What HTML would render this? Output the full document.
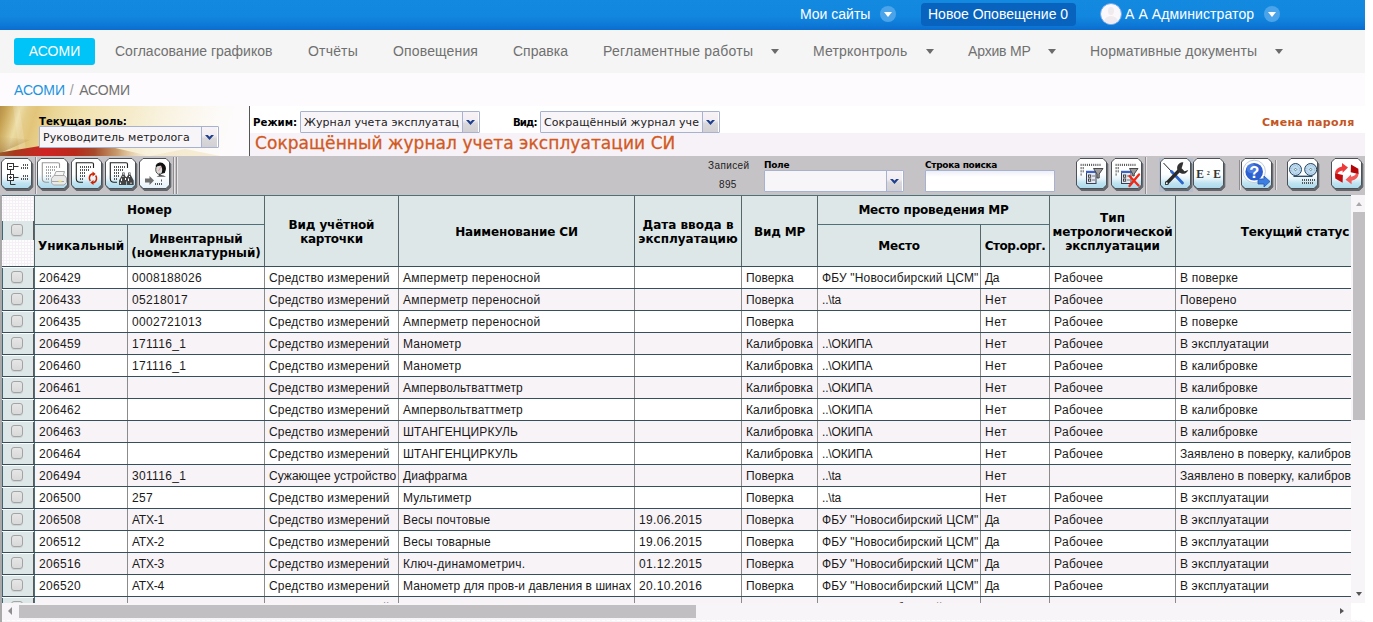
<!DOCTYPE html><html lang="ru"><head><meta charset="utf-8"><title>АСОМИ</title><style>html,body{margin:0;padding:0}
body{width:1373px;height:622px;overflow:hidden;background:#fff;position:relative;font-family:"Liberation Sans",sans-serif;font-size:14px;color:#555}
#page{position:absolute;left:0;top:0;width:1365px;height:622px;overflow:hidden;background:#fdfbfd}
#tstrip{position:absolute;left:250px;top:133px;width:1115px;height:23px;background:#f7f2f7}
#hdr{position:absolute;left:0;top:0;width:1365px;height:30px;background:linear-gradient(#1389e0 0,#1287df 55%,#0d78d6 85%,#0a6ccf 100%);color:#fff}
#hdr span.t{position:absolute;top:0;line-height:29px;font-size:14px;white-space:nowrap}
.circ{position:absolute;width:16px;height:16px;border-radius:50%;background:#4ba4ea;top:6px}
.circ:after{content:"";position:absolute;left:4px;top:6px;border:4px solid transparent;border-top:5px solid #fff;border-bottom:0}
#notif{position:absolute;left:921px;top:3px;width:155px;height:23px;border-radius:4px;background:#0763be}
#ava{position:absolute;left:1100px;top:3px;width:20px;height:20px;border-radius:50%;background:#fbf8fb;border:1px solid #6ea6f0;overflow:hidden}
#ava:before{content:"";position:absolute;left:7px;top:3px;width:6px;height:8px;border-radius:50%;background:#efebef}
#ava:after{content:"";position:absolute;left:3px;top:12px;width:14px;height:12px;border-radius:50% 50% 0 0;background:#efebef}
#nav{position:absolute;left:0;top:30px;width:1365px;height:43px;background:#f5f5f5}
#nav span{position:absolute;top:0;line-height:42px;font-size:14px;color:#707070;white-space:nowrap}
#nav i.car{position:absolute;top:19px;border:4px solid transparent;border-top:5px solid #6b6b6b;border-bottom:0;width:0;height:0}
#nav .act{left:14px;top:8px;width:81px;height:27px;line-height:27px;border-radius:3px;background:#00c3f7;color:#fff;text-align:center}
#bc{position:absolute;left:14px;top:74px;line-height:33px;font-size:14px;color:#707070;white-space:pre;letter-spacing:-.12px}
#bc b{font-weight:normal;color:#1b94e0}
#bc i{font-style:normal;color:#9c9c9c;margin:0 1.800px 0 1.200px}
#role{position:absolute;left:0;top:106px;width:249px;height:50px;overflow:hidden}
#vline{position:absolute;left:249px;top:106px;width:1px;height:50px;background:#555}
.lbl{position:absolute;font-family:"DejaVu Sans",sans-serif;font-weight:bold;font-size:10.2px;color:#000;white-space:nowrap;line-height:12px}
.lbl.s{font-size:9px;letter-spacing:-.3px}
.sel{position:absolute;box-sizing:border-box;border:1px solid #a7b2d0;background:#f8f5f9;font-family:"DejaVu Sans",sans-serif;font-size:11px;letter-spacing:.15px;color:#222;white-space:nowrap;overflow:hidden;height:22px;line-height:22px;padding-left:3px;border-radius:1px}
.sel b{position:absolute;right:0;top:0;bottom:0;width:16px;background:linear-gradient(#f6f2f6 0,#f1edf1 42%,#d9d7d9 58%,#d2d0d2 100%);border-left:1px solid #a7b2d0;box-shadow:inset -1px 0 0 #fff}
.sel b:after{content:"";position:absolute;left:3px;top:8px;width:9px;height:5px;background:#1f3f8f;clip-path:polygon(0 0,2.800px 0,4.500px 1.800px,6.200px 0,9px 0,4.500px 5px)}
#title{position:absolute;left:255px;top:133px;font-size:17px;line-height:20px;color:#d2591f;white-space:nowrap;font-family:"DejaVu Sans","Liberation Sans",sans-serif;letter-spacing:.06px;-webkit-text-stroke:.3px #d2591f}
#titlebg{position:absolute;left:250px;top:106px;width:1115px;height:27px;background:#fff}
#pwd{position:absolute;left:1262px;top:116px;font-family:"DejaVu Sans",sans-serif;font-weight:bold;font-size:11px;color:#c4561f;white-space:nowrap;letter-spacing:.3px}
#tb{position:absolute;left:0;top:156px;width:1365px;height:39px;background:#c5c3c6}
.btn{position:absolute;top:2px;overflow:visible}
.sep{position:absolute;top:1px;width:1px;height:37px;background:#8f8d90;box-shadow:1px 0 0 #e6e4e7}
.small{position:absolute;font-family:"Liberation Sans",sans-serif;font-size:10px;color:#222;white-space:nowrap;line-height:12px}
#grid{position:absolute;left:0;top:195px;width:1351px;height:408px;overflow:hidden;background:#fdfbfd}
#grid:before{content:"";position:absolute;left:0;top:0;width:2px;height:100%;background:#a9a9a9;z-index:3}
.th{position:absolute;box-sizing:content-box;border-left:1px solid #56676b;border-top:1px solid #4f7078;background:#dde7e7;display:flex;align-items:center;justify-content:center;text-align:center;font-family:"DejaVu Sans",sans-serif;font-weight:bold;font-size:12px;line-height:14px;color:#000;overflow:hidden}
.th span{display:block;white-space:nowrap}
.th i{font-style:normal}
.chh{position:absolute;left:2px;top:1px;width:32px;height:70px;background:#fefdfe radial-gradient(#f5f0f5 1px,rgba(255,255,255,0) 1.300px) 0 0/3px 3px;border-top:0}
.chm{position:absolute;left:2px;top:26px;width:30px;height:19px;background:#dde7e7;border-left:1px solid #3f6672;border-right:1px solid #5a5a5a}
.cb{position:absolute;left:8px;top:3px;width:10px;height:10px;border:1px solid #a3a3a3;border-radius:3px;background:linear-gradient(#e6e6e6,#d9d9d9);box-shadow:0 1px 0 rgba(0,0,0,.08)}
.row{position:absolute;left:0;width:1500px;height:22px}
.row .cc{position:absolute;left:2px;top:1px;width:30px;height:20px;background:#dde7e7;border-left:1px solid #3f6672;border-right:1px solid #5a5a5a}
.row .cc .cb{left:8px;top:3px}
.row:before{content:"";position:absolute;left:2px;top:-1px;width:1500px;height:1px;background:#35505b}
.td{position:absolute;top:0;height:21px;box-sizing:content-box;border-left:1px solid #8b8b8b;font-size:12px;line-height:23px;color:#1a1a1a;white-space:nowrap;overflow:hidden;padding-left:4px;letter-spacing:.08px}
.td.d{letter-spacing:.33px}
.td.s{letter-spacing:.2px}
.r0 .td{background:#fff}
.r1 .td{background:#f7f3f7}
.td{margin:0}
#vs{position:absolute;left:1351px;top:195px;width:14px;height:408px;background:#f8f5f8}
#vs b{position:absolute;left:2px;top:17px;width:12px;height:208px;background:#c1bfc2}
#hs{position:absolute;left:2px;top:603px;width:1349px;height:17px;background:#f8f5f8}
#hs b{position:absolute;left:17px;top:2px;width:677px;height:13px;background:#c1bfc2}
.ar{position:absolute;width:0;height:0;border:0 solid transparent}

.td:nth-child(2){border-left-color:#4a6f7a}
</style></head><body>
<div id="page">
<div id="hdr">
<span class="t" style="left:800px">Мои сайты</span><i class="circ" style="left:880px"></i>
<div id="notif"></div><span class="t" style="left:928px">Новое Оповещение 0</span>
<div id="ava"></div><span class="t" style="left:1125px;letter-spacing:.1px">А А Администратор</span><i class="circ" style="left:1264px"></i>
</div>
<div id="nav">
<span class="act">АСОМИ</span>
<span style="left:115px">Согласование графиков</span>
<span style="left:308px;letter-spacing:.18px">Отчёты</span>
<span style="left:393px;letter-spacing:.15px">Оповещения</span>
<span style="left:513px">Справка</span>
<span style="left:603px;letter-spacing:.23px">Регламентные работы</span><i class="car" style="left:771px"></i>
<span style="left:813px;letter-spacing:.18px">Метрконтроль</span><i class="car" style="left:926px"></i>
<span style="left:968px;letter-spacing:-.17px">Архив МР</span><i class="car" style="left:1048px"></i>
<span style="left:1090px;letter-spacing:.12px">Нормативные документы</span><i class="car" style="left:1275px"></i>
</div>
<div id="bc"><b>АСОМИ</b><i> / </i>АСОМИ</div>
<div id="titlebg"></div><div id="tstrip"></div>
<div id="role"><svg width="249" height="50" viewBox="0 0 249 50"><defs>
<linearGradient id="g1" x1="0" y1="0" x2="1" y2="0.06"><stop offset="0" stop-color="#b58f46"/><stop offset=".03" stop-color="#caa658"/><stop offset=".06" stop-color="#dcc27c"/><stop offset=".085" stop-color="#ecdca4"/><stop offset=".115" stop-color="#e4cb88"/><stop offset=".15" stop-color="#e2c57a"/><stop offset=".22" stop-color="#ead595"/><stop offset=".34" stop-color="#f1e2b0"/><stop offset=".5" stop-color="#f5eac6"/><stop offset=".64" stop-color="#f8f1dc"/><stop offset=".78" stop-color="#fbf7ee"/><stop offset=".9" stop-color="#fdfbf9"/><stop offset="1" stop-color="#fdfbfd"/></linearGradient>
<linearGradient id="g2" x1="0" y1="0" x2="1" y2="0"><stop offset="0" stop-color="#96582c"/><stop offset=".1" stop-color="#a8381e"/><stop offset=".3" stop-color="#cf2424"/><stop offset=".5" stop-color="#b82a1c"/><stop offset=".63" stop-color="#a64a2c"/><stop offset=".78" stop-color="#bf8c5c" stop-opacity=".85"/><stop offset="1" stop-color="#ead8b0" stop-opacity="0"/></linearGradient>
<linearGradient id="g4" x1="0" y1="0" x2="0" y2="1"><stop offset="0" stop-color="#9a7a3c" stop-opacity="0"/><stop offset="1" stop-color="#9a6a34" stop-opacity=".55"/></linearGradient>
</defs><rect width="249" height="50" fill="url(#g1)"/>
<path d="M13 0L19 0L27 50L20 50z" fill="#fff" opacity=".15"/>
<path d="M0 30L30 34L0 47z" fill="url(#g4)"/>
<path d="M0 46.500L40 40L100 38.500L150 50H0z" fill="url(#g2)"/>
<path d="M150 50l35-7 35 7z" fill="#f1e2c0" opacity=".6"/>
</svg></div><div id="vline"></div>
<div class="lbl" style="left:39px;top:116px">Текущая роль:</div>
<div class="sel" style="left:39px;top:126px;width:180px;letter-spacing:.03px">Руководитель метролога<b></b></div>
<div class="lbl" style="left:253px;top:117px">Режим:</div>
<div class="sel" style="left:300px;top:111px;width:180px;letter-spacing:.09px">Журнал учета эксплуатац<b></b></div>
<div class="lbl" style="left:513px;top:117px;letter-spacing:-.9px">Вид:</div>
<div class="sel" style="left:540px;top:111px;width:180px;letter-spacing:.08px">Сокращённый журнал уче<b></b></div>
<div id="title">Сокращённый журнал учета эксплуатации СИ</div>
<div id="pwd">Смена пароля</div>
<svg width="0" height="0" style="position:absolute"><defs><linearGradient id="bg" x1="0" y1="0" x2="0" y2="1"><stop offset="0" stop-color="#fff"/><stop offset=".52" stop-color="#fdfeff"/><stop offset=".68" stop-color="#e6f4fa"/><stop offset=".82" stop-color="#bfe3f0"/><stop offset="1" stop-color="#acd9ec"/></linearGradient><linearGradient id="bgu" x1="0" y1="0" x2="0" y2="1"><stop offset="0" stop-color="#fff"/><stop offset=".6" stop-color="#fff"/><stop offset="1" stop-color="#e3f0fa"/></linearGradient></defs></svg><div id="tb">
<svg class="btn" style="left:1px" width="34" height="34" viewBox="0 0 34 34"><path d="M4 .5H27L30.500 4V27L27 30.500H4L.5 27V4Z" transform="translate(1.3,2)" fill="#63676c" stroke="#63676c" stroke-linejoin="round"/><path d="M4 .5H27L30.500 4V27L27 30.500H4L.5 27V4Z" fill="url(#bg)" stroke="#4c5157" stroke-width="1" stroke-linejoin="round"/><g fill="none" stroke="#333" stroke-width="1"><rect x="6.500" y="5.500" width="6" height="6" fill="#fff"/><path d="M8 8.500h3M12.500 8.500h5M9.500 11.500v5"/><rect x="6.500" y="16.500" width="6" height="6" fill="#fff"/><path d="M8 19.500h3M9.500 18v3M12.500 19.500h5M9.500 22.500v4h5"/></g><rect x="22" y="6" width="1" height="2" fill="#555"/><rect x="24" y="6" width="1" height="2" fill="#555"/><rect x="26" y="6" width="1" height="2" fill="#555"/><rect x="20" y="9" width="1" height="2" fill="#555"/><rect x="22" y="9" width="1" height="2" fill="#555"/><rect x="24" y="9" width="1" height="2" fill="#555"/><rect x="26" y="9" width="1" height="2" fill="#555"/><rect x="22" y="17" width="1" height="2" fill="#555"/><rect x="24" y="17" width="1" height="2" fill="#555"/><rect x="26" y="17" width="1" height="2" fill="#555"/><rect x="20" y="20" width="1" height="2" fill="#555"/><rect x="22" y="20" width="1" height="2" fill="#555"/><rect x="24" y="20" width="1" height="2" fill="#555"/><rect x="26" y="20" width="1" height="2" fill="#555"/></svg><div class="sep" style="left:35px"></div>
<svg class="btn" style="left:37px" width="34" height="34" viewBox="0 0 34 34"><path d="M4 .5H27L30.500 4V27L27 30.500H4L.5 27V4Z" transform="translate(1.3,2)" fill="#63676c" stroke="#63676c" stroke-linejoin="round"/><path d="M4 .5H27L30.500 4V27L27 30.500H4L.5 27V4Z" fill="url(#bg)" stroke="#4c5157" stroke-width="1" stroke-linejoin="round"/><path d="M22.500 10V6Q22.500 4.700 21 4.700H5.300V20.500Q5.300 24.300 9 24.300H12" fill="none" stroke="#999" stroke-width="1.100"/><rect x="9" y="8" width="1" height="2" fill="#a4a4a4"/><rect x="11" y="8" width="1" height="2" fill="#a4a4a4"/><rect x="13" y="8" width="1" height="2" fill="#a4a4a4"/><rect x="15" y="8" width="1" height="2" fill="#a4a4a4"/><rect x="17" y="8" width="1" height="2" fill="#a4a4a4"/><rect x="19" y="8" width="1" height="2" fill="#a4a4a4"/><rect x="9" y="11" width="1" height="2" fill="#a4a4a4"/><rect x="11" y="11" width="1" height="2" fill="#a4a4a4"/><rect x="13" y="11" width="1" height="2" fill="#a4a4a4"/><rect x="15" y="11" width="1" height="2" fill="#a4a4a4"/><rect x="17" y="11" width="1" height="2" fill="#a4a4a4"/><rect x="9" y="14" width="1" height="2" fill="#a4a4a4"/><rect x="11" y="14" width="1" height="2" fill="#a4a4a4"/><rect x="13" y="14" width="1" height="2" fill="#a4a4a4"/><rect x="9" y="17" width="1" height="2" fill="#a4a4a4"/><rect x="11" y="17" width="1" height="2" fill="#a4a4a4"/><rect x="13" y="17" width="1" height="2" fill="#a4a4a4"/><rect x="9" y="20" width="1" height="2" fill="#a4a4a4"/><rect x="11" y="20" width="1" height="2" fill="#a4a4a4"/><g stroke="#a8a8a8" stroke-width="1" fill="#f6f6f6"><path d="M19 13.500h8.500l-1.500 5h-9z"/><path d="M14.500 20.500l2.500-3h10.500l2 2.500v4.500l-2.500 2.500h-10.500l-2-2z" fill="#e9e9e9"/><path d="M15 23.500h12" /><rect x="21.500" y="22.800" width="3" height="1.400" fill="#e8e060" stroke="none"/></g></svg>
<svg class="btn" style="left:71px" width="34" height="34" viewBox="0 0 34 34"><path d="M4 .5H27L30.500 4V27L27 30.500H4L.5 27V4Z" transform="translate(1.3,2)" fill="#63676c" stroke="#63676c" stroke-linejoin="round"/><path d="M4 .5H27L30.500 4V27L27 30.500H4L.5 27V4Z" fill="url(#bg)" stroke="#4c5157" stroke-width="1" stroke-linejoin="round"/><path d="M22.500 10V6Q22.500 4.700 21 4.700H5.300V20.500Q5.300 24.300 9 24.300H12" fill="none" stroke="#222" stroke-width="1.100"/><rect x="9" y="8" width="1" height="2" fill="#555"/><rect x="11" y="8" width="1" height="2" fill="#555"/><rect x="13" y="8" width="1" height="2" fill="#555"/><rect x="15" y="8" width="1" height="2" fill="#555"/><rect x="17" y="8" width="1" height="2" fill="#555"/><rect x="19" y="8" width="1" height="2" fill="#555"/><rect x="9" y="11" width="1" height="2" fill="#555"/><rect x="11" y="11" width="1" height="2" fill="#555"/><rect x="13" y="11" width="1" height="2" fill="#555"/><rect x="15" y="11" width="1" height="2" fill="#555"/><rect x="17" y="11" width="1" height="2" fill="#555"/><rect x="9" y="14" width="1" height="2" fill="#555"/><rect x="11" y="14" width="1" height="2" fill="#555"/><rect x="13" y="14" width="1" height="2" fill="#555"/><rect x="9" y="17" width="1" height="2" fill="#555"/><rect x="11" y="17" width="1" height="2" fill="#555"/><rect x="13" y="17" width="1" height="2" fill="#555"/><rect x="9" y="20" width="1" height="2" fill="#555"/><rect x="11" y="20" width="1" height="2" fill="#555"/><g fill="none" stroke="#cc2200" stroke-width="1.500"><path d="M19.300 23a3.600 4.300 0 0 1 1.500-7h1.500"/><path d="M24.600 17.500a3.600 4.300 0 0 1-1.500 7h-1.500"/></g><path d="M21.500 13.600l3.200 2.400-3.200 2.400z" fill="#cc2200"/><path d="M22.500 22.100l-3.200 2.400 3.200 2.400z" fill="#cc2200"/></svg>
<svg class="btn" style="left:105px" width="34" height="34" viewBox="0 0 34 34"><path d="M4 .5H27L30.500 4V27L27 30.500H4L.5 27V4Z" transform="translate(1.3,2)" fill="#63676c" stroke="#63676c" stroke-linejoin="round"/><path d="M4 .5H27L30.500 4V27L27 30.500H4L.5 27V4Z" fill="url(#bg)" stroke="#4c5157" stroke-width="1" stroke-linejoin="round"/><path d="M22.500 10V6Q22.500 4.700 21 4.700H5.300V20.500Q5.300 24.300 9 24.300H12" fill="none" stroke="#222" stroke-width="1.100"/><rect x="9" y="8" width="1" height="2" fill="#555"/><rect x="11" y="8" width="1" height="2" fill="#555"/><rect x="13" y="8" width="1" height="2" fill="#555"/><rect x="15" y="8" width="1" height="2" fill="#555"/><rect x="17" y="8" width="1" height="2" fill="#555"/><rect x="19" y="8" width="1" height="2" fill="#555"/><rect x="9" y="11" width="1" height="2" fill="#555"/><rect x="11" y="11" width="1" height="2" fill="#555"/><rect x="13" y="11" width="1" height="2" fill="#555"/><rect x="15" y="11" width="1" height="2" fill="#555"/><rect x="17" y="11" width="1" height="2" fill="#555"/><rect x="9" y="14" width="1" height="2" fill="#555"/><rect x="11" y="14" width="1" height="2" fill="#555"/><rect x="13" y="14" width="1" height="2" fill="#555"/><rect x="9" y="17" width="1" height="2" fill="#555"/><rect x="11" y="17" width="1" height="2" fill="#555"/><rect x="13" y="17" width="1" height="2" fill="#555"/><rect x="9" y="20" width="1" height="2" fill="#555"/><rect x="11" y="20" width="1" height="2" fill="#555"/><g fill="#454545"><path d="M17.300 14.400h2.300v2.300l1.400 2.500v7.800h-7v-4.500l3.300-6z"/><path d="M23.200 14.400h2.300v2l3.200 6v4.600h-7v-7.800l1.500-2.500z"/><rect x="20" y="19" width="3" height="4.500"/></g><g fill="#fff"><rect x="18" y="15.300" width="1" height="1.200"/><rect x="24" y="15.300" width="1" height="1.200"/><rect x="16" y="20.500" width="1" height="2.500"/><rect x="20" y="20" width="1" height="2"/><rect x="23" y="20.500" width="1" height="2.500"/><rect x="15" y="24.500" width="1" height="1.500"/><rect x="25.500" y="24.500" width="1" height="1.500"/><rect x="17.500" y="18" width="1" height="1"/><rect x="24" y="18" width="1" height="1"/></g></svg>
<svg class="btn" style="left:139px" width="34" height="34" viewBox="0 0 34 34"><path d="M4 .5H27L30.500 4V27L27 30.500H4L.5 27V4Z" transform="translate(1.3,2)" fill="#63676c" stroke="#63676c" stroke-linejoin="round"/><path d="M4 .5H27L30.500 4V27L27 30.500H4L.5 27V4Z" fill="url(#bgu)" stroke="#4c5157" stroke-width="1" stroke-linejoin="round"/><path d="M6 20.500h4.500v-2.500l4.500 4.500-4.500 4.500v-2.500h-4.500z" fill="#6e6e6e"/><rect x="16" y="25" width="1" height="2" fill="#555"/><rect x="18" y="25" width="1" height="2" fill="#555"/><rect x="20" y="25" width="1" height="2" fill="#555"/><rect x="22" y="25" width="1" height="2" fill="#555"/><rect x="22" y="21.500" width="1" height="2" fill="#555"/><ellipse cx="20.500" cy="11.500" rx="3.800" ry="5" fill="#d8d8d8" stroke="#333" stroke-width=".8"/><path d="M17 8.500a4.500 4.500 0 0 1 8-1.500q2.500 3 .3 7.500l-2 .5q1.500-4-1-7.500" fill="#111" stroke="#111" stroke-width="1.200"/><path d="M19.500 13l2.500-4.500" stroke="#e99" stroke-width="1"/><path d="M17.500 18.700q4.500-3.500 9.500 0z" fill="#555"/><rect x="20" y="15.500" width="1.500" height="2.500" fill="#444"/></svg>
<div class="sep" style="left:173px"></div><div class="sep" style="left:176px"></div>
<div class="small" style="left:708px;top:4px;letter-spacing:.4px">Записей</div>
<div class="small" style="left:719px;top:23px;letter-spacing:.35px">895</div>
<div class="lbl s" style="left:764px;top:3px">Поле</div>
<div class="sel" style="left:764px;top:14px;width:140px"><b></b></div>
<div class="lbl s" style="left:925px;top:3px">Строка поиска</div>
<div class="sel" style="left:925px;top:14px;width:130px;background:linear-gradient(#eef0f8,#fff 6px)"></div>
<svg class="btn" style="left:1076px" width="34" height="34" viewBox="0 0 34 34"><path d="M4 .5H27L30.500 4V27L27 30.500H4L.5 27V4Z" transform="translate(1.3,2)" fill="#63676c" stroke="#63676c" stroke-linejoin="round"/><path d="M4 .5H27L30.500 4V27L27 30.500H4L.5 27V4Z" fill="url(#bg)" stroke="#4c5157" stroke-width="1" stroke-linejoin="round"/><rect x="4.6" y="5.8" width="1" height="2.2" fill="#555"/><rect x="6.7" y="5.8" width="1" height="2.2" fill="#555"/><rect x="8.8" y="5.8" width="1" height="2.2" fill="#555"/><rect x="10.9" y="5.8" width="1" height="2.2" fill="#555"/><rect x="13" y="5.8" width="1" height="2.2" fill="#555"/><rect x="15.1" y="5.8" width="1" height="2.2" fill="#555"/><rect x="17.2" y="5.8" width="1" height="2.2" fill="#555"/><rect x="19.3" y="5.8" width="1" height="2.2" fill="#555"/><rect x="21.4" y="5.8" width="1" height="2.2" fill="#555"/><rect x="23.5" y="5.8" width="1" height="2.2" fill="#555"/><rect x="4.6" y="9" width="1" height="2.2" fill="#555"/><rect x="6.7" y="9" width="1" height="2.2" fill="#555"/><rect x="4.6" y="12.2" width="1" height="2.2" fill="#555"/><rect x="6.7" y="12.2" width="1" height="2.2" fill="#555"/><rect x="4.6" y="15.4" width="1" height="2.2" fill="#555"/><rect x="10.500" y="14" width="9.500" height="11.500" fill="#e4e9f4" stroke="#3a3f55" stroke-width="1"/><rect x="10" y="12.800" width="10.500" height="2.200" fill="#3a62c8"/><rect x="12.500" y="17" width="2.200" height="2.200" fill="#fff" stroke="#333" stroke-width=".9"/><rect x="12.500" y="21" width="2.200" height="2.200" fill="#fff" stroke="#333" stroke-width=".9"/><path d="M16 18h3M16 22h3" stroke="#666" stroke-width=".9"/><path d="M17.500 10.500h9.500l-3.800 5.500v4h-2.200v-4z" fill="#9c9c9c" stroke="#3a3a3a" stroke-width=".9"/></svg>
<svg class="btn" style="left:1111px" width="34" height="34" viewBox="0 0 34 34"><path d="M4 .5H27L30.500 4V27L27 30.500H4L.5 27V4Z" transform="translate(1.3,2)" fill="#63676c" stroke="#63676c" stroke-linejoin="round"/><path d="M4 .5H27L30.500 4V27L27 30.500H4L.5 27V4Z" fill="url(#bg)" stroke="#4c5157" stroke-width="1" stroke-linejoin="round"/><rect x="4.6" y="5.8" width="1" height="2.2" fill="#555"/><rect x="6.7" y="5.8" width="1" height="2.2" fill="#555"/><rect x="8.8" y="5.8" width="1" height="2.2" fill="#555"/><rect x="10.9" y="5.8" width="1" height="2.2" fill="#555"/><rect x="13" y="5.8" width="1" height="2.2" fill="#555"/><rect x="15.1" y="5.8" width="1" height="2.2" fill="#555"/><rect x="17.2" y="5.8" width="1" height="2.2" fill="#555"/><rect x="19.3" y="5.8" width="1" height="2.2" fill="#555"/><rect x="21.4" y="5.8" width="1" height="2.2" fill="#555"/><rect x="23.5" y="5.8" width="1" height="2.2" fill="#555"/><rect x="4.6" y="9" width="1" height="2.2" fill="#555"/><rect x="6.7" y="9" width="1" height="2.2" fill="#555"/><rect x="4.6" y="12.2" width="1" height="2.2" fill="#555"/><rect x="6.7" y="12.2" width="1" height="2.2" fill="#555"/><rect x="4.6" y="15.4" width="1" height="2.2" fill="#555"/><rect x="10.500" y="14" width="9.500" height="11.500" fill="#e4e9f4" stroke="#3a3f55" stroke-width="1"/><rect x="10" y="12.800" width="10.500" height="2.200" fill="#3a62c8"/><rect x="12.500" y="17" width="2.200" height="2.200" fill="#fff" stroke="#333" stroke-width=".9"/><rect x="12.500" y="21" width="2.200" height="2.200" fill="#fff" stroke="#333" stroke-width=".9"/><path d="M16 18h3M16 22h3" stroke="#666" stroke-width=".9"/><path d="M18.500 10.500h8.500l-3.800 5.500v2h-1.500v-2z" fill="#9c9c9c" stroke="#3a3a3a" stroke-width=".9"/><path d="M18.500 18l9 9.500M28 16.500l-9.500 11.500" stroke="#f02814" stroke-width="2.300" stroke-linecap="round" fill="none"/></svg><div class="sep" style="left:1145px"></div>
<div style="position:absolute;left:1159px;top:2px;width:34px;height:34px;background:#b3bdcb"></div>
<svg class="btn" style="left:1160px" width="34" height="34" viewBox="0 0 34 34"><path d="M4 .5H27L30.500 4V27L27 30.500H4L.5 27V4Z" transform="translate(1.3,2)" fill="#63676c" stroke="#63676c" stroke-linejoin="round"/><path d="M4 .5H27L30.500 4V27L27 30.500H4L.5 27V4Z" fill="url(#bg)" stroke="#4c5157" stroke-width="1" stroke-linejoin="round"/><path d="M3.500 5l9 9.500" stroke="#222" stroke-width="1"/><path d="M11.500 13.500l11 11.500" stroke="#2a66cc" stroke-width="2.800" stroke-linecap="round"/><path d="M7 25L19.500 12" stroke="#2a2a2a" stroke-width="3.300" stroke-linecap="round"/><path d="M23.300 4.200a5.800 5.800 0 1 0 5 7.800l-3.800 1.200-2.900-2.900 1.200-3.800z" fill="#333"/><rect x="5.500" y="24" width="2.500" height="2.500" fill="#fff" stroke="#222" stroke-width=".8"/></svg>
<svg class="btn" style="left:1193.4px" width="34" height="34" viewBox="0 0 34 34"><path d="M4 .5H27L30.500 4V27L27 30.500H4L.5 27V4Z" transform="translate(1.3,2)" fill="#63676c" stroke="#63676c" stroke-linejoin="round"/><path d="M4 .5H27L30.500 4V27L27 30.500H4L.5 27V4Z" fill="url(#bg)" stroke="#4c5157" stroke-width="1" stroke-linejoin="round"/><text x="3.300" y="20" font-family="Liberation Serif,serif" font-weight="bold" font-size="11.500" fill="#333">E</text><text x="13.800" y="17" font-family="Liberation Serif,serif" font-weight="bold" font-size="6" fill="#333">2</text><text x="20.300" y="20" font-family="Liberation Serif,serif" font-weight="bold" font-size="11.500" fill="#333">E</text></svg><div class="sep" style="left:1239px;top:4px;height:30px"></div>
<svg class="btn" style="left:1241px" width="34" height="34" viewBox="0 0 34 34"><path d="M4 .5H27L30.500 4V27L27 30.500H4L.5 27V4Z" transform="translate(1.3,2)" fill="#63676c" stroke="#63676c" stroke-linejoin="round"/><path d="M4 .5H27L30.500 4V27L27 30.500H4L.5 27V4Z" fill="url(#bg)" stroke="#4c5157" stroke-width="1" stroke-linejoin="round"/><circle cx="13.200" cy="13.400" r="11.200" fill="#fff" stroke="#c4ccdc" stroke-width="1"/><circle cx="13.200" cy="13.700" r="8.800" fill="#2c5fd0"/><circle cx="10.500" cy="10.500" r="4.800" fill="#6a96ee" opacity=".55"/><text x="8.200" y="19.800" font-family="Liberation Sans,sans-serif" font-weight="bold" font-size="16.500" fill="#fff">?</text><path d="M17 21h6v-3l6 5.500-6 5.500v-3h-6z" fill="#3d7fe0" stroke="#2a57b0" stroke-width=".8"/></svg><div class="sep" style="left:1275px;top:4px;height:30px"></div>
<svg class="btn" style="left:1287.3px" width="34" height="34" viewBox="0 0 34 34"><path d="M4 .5H27L30.500 4V27L27 30.500H4L.5 27V4Z" transform="translate(1.3,2)" fill="#63676c" stroke="#63676c" stroke-linejoin="round"/><path d="M4 .5H27L30.500 4V27L27 30.500H4L.5 27V4Z" fill="url(#bg)" stroke="#4c5157" stroke-width="1" stroke-linejoin="round"/><g fill="#bcdeee" stroke="#24435f" stroke-width="1"><circle cx="8.500" cy="11.500" r="6"/><circle cx="23.700" cy="11.500" r="6"/></g><g fill="none" stroke="#a9a4dc" stroke-width=".8" stroke-dasharray="1.500 1"><circle cx="8.500" cy="11.500" r="4"/><circle cx="23.700" cy="11.500" r="4"/></g><path d="M8.500 10.200l1.300 1.300-1.300 1.300-1.300-1.300zM23.700 10.200l1.300 1.300-1.300 1.300-1.300-1.300z" fill="#fff" stroke="#24435f" stroke-width=".6"/><path d="M6.500 18.300h19" stroke="#24435f" stroke-width="1.300"/><rect x="15" y="21" width="1" height="2" fill="#555"/><rect x="17" y="21" width="1" height="2" fill="#555"/><rect x="19" y="21" width="1" height="2" fill="#555"/><rect x="21" y="21" width="1" height="2" fill="#555"/><rect x="23" y="21" width="1" height="2" fill="#555"/><rect x="25" y="21" width="1" height="2" fill="#555"/><rect x="27" y="21" width="1" height="2" fill="#555"/><rect x="15" y="24" width="1" height="2" fill="#555"/><rect x="17" y="24" width="1" height="2" fill="#555"/><rect x="19" y="24" width="1" height="2" fill="#555"/><rect x="21" y="24" width="1" height="2" fill="#555"/><rect x="23" y="24" width="1" height="2" fill="#555"/><rect x="25" y="24" width="1" height="2" fill="#555"/></svg>
<svg class="btn" style="left:1331px" width="34" height="34" viewBox="0 0 34 34"><path d="M4 .5H27L30.500 4V27L27 30.500H4L.5 27V4Z" transform="translate(1.3,2)" fill="#63676c" stroke="#63676c" stroke-linejoin="round"/><path d="M4 .5H27L30.500 4V27L27 30.500H4L.5 27V4Z" fill="url(#bg)" stroke="#4c5157" stroke-width="1" stroke-linejoin="round"/><path d="M4 15.500Q4.300 9.800 11 8.500V5L17 9.500L11.600 14.700V12.400Q7.300 13 6.500 15.900Z" fill="#ee3a3a"/><path d="M4 15.300L11.900 17L11.600 24.800L4.300 20.500Z" fill="#c00a0c"/><g transform="rotate(180 15.800 15.600)"><path d="M4 15.500Q4.300 9.800 11 8.500V5L17 9.500L11.600 14.700V12.400Q7.300 13 6.500 15.900Z" fill="#f25a5a"/><path d="M4 15.300L11.900 17L11.600 24.800L4.300 20.500Z" fill="#b30508"/></g></svg>
</div>


<div id="grid">
<div class="th" style="left:34px;top:0px;width:229px;height:28px"><span>Номер</span></div>
<div class="th" style="left:34px;top:29px;width:92px;height:42px"><span>Уникальный</span></div>
<div class="th" style="left:127px;top:29px;width:136px;height:42px"><span>Инвентарный<br>(номенклатурный)</span></div>
<div class="th" style="left:264px;top:0px;width:133px;height:71px"><span><i style='letter-spacing:-.16px'>Вид учётной</i><br><i style='letter-spacing:-.28px'>карточки</i></span></div>
<div class="th" style="left:398px;top:0px;width:235px;height:71px"><span><i style='letter-spacing:-.13px'>Наименование СИ</i></span></div>
<div class="th" style="left:634px;top:0px;width:106px;height:71px"><span>Дата ввода в<br>эксплуатацию</span></div>
<div class="th" style="left:741px;top:0px;width:75px;height:71px"><span><i style='letter-spacing:-.2px'>Вид МР</i></span></div>
<div class="th" style="left:817px;top:0px;width:231px;height:28px"><span><i style='letter-spacing:-.23px'>Место проведения МР</i></span></div>
<div class="th" style="left:817px;top:29px;width:162px;height:42px"><span><i style='letter-spacing:-.2px'>Место</i></span></div>
<div class="th" style="left:980px;top:29px;width:68px;height:42px"><span><i style='letter-spacing:-.47px'>Стор.орг.</i></span></div>
<div class="th" style="left:1049px;top:0px;width:125px;height:71px"><span>Тип<br><i style='letter-spacing:-.11px'>метрологической</i><br><i style='letter-spacing:-.12px'>эксплуатации</i></span></div>
<div class="th" style="left:1175px;top:0px;width:238px;height:71px"><span><i style='letter-spacing:-.16px'>Текущий статус</i></span></div>
<div style="position:absolute;left:2px;top:0;width:33px;height:1px;background:#4f7078"></div><div class="chh"></div><div class="chm"><i class="cb"></i></div>
<div class="row r0" style="top:72px">
<div class="cc"><i class="cb"></i></div>
<div class="td" style="left:34px;width:88px;letter-spacing:0.33px">206429</div>
<div class="td" style="left:127px;width:132px;letter-spacing:0.33px">0008188026</div>
<div class="td" style="left:264px;width:129px;letter-spacing:0.2px">Средство измерений</div>
<div class="td" style="left:398px;width:231px;letter-spacing:0.27px">Амперметр переносной</div>
<div class="td" style="left:634px;width:102px;letter-spacing:0.33px"></div>
<div class="td" style="left:741px;width:71px;letter-spacing:0.08px">Поверка</div>
<div class="td" style="left:817px;width:158px;letter-spacing:0.16px">ФБУ &quot;Новосибирский ЦСМ&quot;</div>
<div class="td" style="left:980px;width:64px;letter-spacing:-0.5px">Да</div>
<div class="td" style="left:1049px;width:121px;letter-spacing:0.3px">Рабочее</div>
<div class="td" style="left:1175px;width:234px;letter-spacing:0.22px">В поверке</div>
</div>
<div class="row r1" style="top:94px">
<div class="cc"><i class="cb"></i></div>
<div class="td" style="left:34px;width:88px;letter-spacing:0.33px">206433</div>
<div class="td" style="left:127px;width:132px;letter-spacing:0.33px">05218017</div>
<div class="td" style="left:264px;width:129px;letter-spacing:0.2px">Средство измерений</div>
<div class="td" style="left:398px;width:231px;letter-spacing:0.27px">Амперметр переносной</div>
<div class="td" style="left:634px;width:102px;letter-spacing:0.33px"></div>
<div class="td" style="left:741px;width:71px;letter-spacing:0.08px">Поверка</div>
<div class="td" style="left:817px;width:158px;letter-spacing:-0.2px">..\ta</div>
<div class="td" style="left:980px;width:64px;letter-spacing:0.5px">Нет</div>
<div class="td" style="left:1049px;width:121px;letter-spacing:0.3px">Рабочее</div>
<div class="td" style="left:1175px;width:234px;letter-spacing:0.22px">Поверено</div>
</div>
<div class="row r0" style="top:116px">
<div class="cc"><i class="cb"></i></div>
<div class="td" style="left:34px;width:88px;letter-spacing:0.33px">206435</div>
<div class="td" style="left:127px;width:132px;letter-spacing:0.33px">0002721013</div>
<div class="td" style="left:264px;width:129px;letter-spacing:0.2px">Средство измерений</div>
<div class="td" style="left:398px;width:231px;letter-spacing:0.27px">Амперметр переносной</div>
<div class="td" style="left:634px;width:102px;letter-spacing:0.33px"></div>
<div class="td" style="left:741px;width:71px;letter-spacing:0.08px">Поверка</div>
<div class="td" style="left:817px;width:158px;letter-spacing:0.08px"></div>
<div class="td" style="left:980px;width:64px;letter-spacing:0.5px">Нет</div>
<div class="td" style="left:1049px;width:121px;letter-spacing:0.3px">Рабочее</div>
<div class="td" style="left:1175px;width:234px;letter-spacing:0.22px">В поверке</div>
</div>
<div class="row r1" style="top:138px">
<div class="cc"><i class="cb"></i></div>
<div class="td" style="left:34px;width:88px;letter-spacing:0.33px">206459</div>
<div class="td" style="left:127px;width:132px;letter-spacing:0.33px">171116_1</div>
<div class="td" style="left:264px;width:129px;letter-spacing:0.2px">Средство измерений</div>
<div class="td" style="left:398px;width:231px;letter-spacing:0.2px">Манометр</div>
<div class="td" style="left:634px;width:102px;letter-spacing:0.33px"></div>
<div class="td" style="left:741px;width:71px;letter-spacing:0.08px">Калибровка</div>
<div class="td" style="left:817px;width:158px;letter-spacing:-0.16px">..\ОКИПА</div>
<div class="td" style="left:980px;width:64px;letter-spacing:0.5px">Нет</div>
<div class="td" style="left:1049px;width:121px;letter-spacing:0.3px">Рабочее</div>
<div class="td" style="left:1175px;width:234px;letter-spacing:0.14px">В эксплуатации</div>
</div>
<div class="row r0" style="top:160px">
<div class="cc"><i class="cb"></i></div>
<div class="td" style="left:34px;width:88px;letter-spacing:0.33px">206460</div>
<div class="td" style="left:127px;width:132px;letter-spacing:0.33px">171116_1</div>
<div class="td" style="left:264px;width:129px;letter-spacing:0.2px">Средство измерений</div>
<div class="td" style="left:398px;width:231px;letter-spacing:0.2px">Манометр</div>
<div class="td" style="left:634px;width:102px;letter-spacing:0.33px"></div>
<div class="td" style="left:741px;width:71px;letter-spacing:0.08px">Калибровка</div>
<div class="td" style="left:817px;width:158px;letter-spacing:-0.16px">..\ОКИПА</div>
<div class="td" style="left:980px;width:64px;letter-spacing:0.5px">Нет</div>
<div class="td" style="left:1049px;width:121px;letter-spacing:0.3px">Рабочее</div>
<div class="td" style="left:1175px;width:234px;letter-spacing:0.16px">В калибровке</div>
</div>
<div class="row r1" style="top:182px">
<div class="cc"><i class="cb"></i></div>
<div class="td" style="left:34px;width:88px;letter-spacing:0.33px">206461</div>
<div class="td" style="left:127px;width:132px;letter-spacing:0.33px"></div>
<div class="td" style="left:264px;width:129px;letter-spacing:0.2px">Средство измерений</div>
<div class="td" style="left:398px;width:231px;letter-spacing:0.17px">Ампервольтваттметр</div>
<div class="td" style="left:634px;width:102px;letter-spacing:0.33px"></div>
<div class="td" style="left:741px;width:71px;letter-spacing:0.08px">Калибровка</div>
<div class="td" style="left:817px;width:158px;letter-spacing:-0.16px">..\ОКИПА</div>
<div class="td" style="left:980px;width:64px;letter-spacing:0.5px">Нет</div>
<div class="td" style="left:1049px;width:121px;letter-spacing:0.3px">Рабочее</div>
<div class="td" style="left:1175px;width:234px;letter-spacing:0.16px">В калибровке</div>
</div>
<div class="row r0" style="top:204px">
<div class="cc"><i class="cb"></i></div>
<div class="td" style="left:34px;width:88px;letter-spacing:0.33px">206462</div>
<div class="td" style="left:127px;width:132px;letter-spacing:0.33px"></div>
<div class="td" style="left:264px;width:129px;letter-spacing:0.2px">Средство измерений</div>
<div class="td" style="left:398px;width:231px;letter-spacing:0.17px">Ампервольтваттметр</div>
<div class="td" style="left:634px;width:102px;letter-spacing:0.33px"></div>
<div class="td" style="left:741px;width:71px;letter-spacing:0.08px">Калибровка</div>
<div class="td" style="left:817px;width:158px;letter-spacing:-0.16px">..\ОКИПА</div>
<div class="td" style="left:980px;width:64px;letter-spacing:0.5px">Нет</div>
<div class="td" style="left:1049px;width:121px;letter-spacing:0.3px">Рабочее</div>
<div class="td" style="left:1175px;width:234px;letter-spacing:0.16px">В калибровке</div>
</div>
<div class="row r1" style="top:226px">
<div class="cc"><i class="cb"></i></div>
<div class="td" style="left:34px;width:88px;letter-spacing:0.33px">206463</div>
<div class="td" style="left:127px;width:132px;letter-spacing:0.33px"></div>
<div class="td" style="left:264px;width:129px;letter-spacing:0.2px">Средство измерений</div>
<div class="td" style="left:398px;width:231px;letter-spacing:0.12px">ШТАНГЕНЦИРКУЛЬ</div>
<div class="td" style="left:634px;width:102px;letter-spacing:0.33px"></div>
<div class="td" style="left:741px;width:71px;letter-spacing:0.08px">Калибровка</div>
<div class="td" style="left:817px;width:158px;letter-spacing:-0.16px">..\ОКИПА</div>
<div class="td" style="left:980px;width:64px;letter-spacing:0.5px">Нет</div>
<div class="td" style="left:1049px;width:121px;letter-spacing:0.3px">Рабочее</div>
<div class="td" style="left:1175px;width:234px;letter-spacing:0.16px">В калибровке</div>
</div>
<div class="row r0" style="top:248px">
<div class="cc"><i class="cb"></i></div>
<div class="td" style="left:34px;width:88px;letter-spacing:0.33px">206464</div>
<div class="td" style="left:127px;width:132px;letter-spacing:0.33px"></div>
<div class="td" style="left:264px;width:129px;letter-spacing:0.2px">Средство измерений</div>
<div class="td" style="left:398px;width:231px;letter-spacing:0.12px">ШТАНГЕНЦИРКУЛЬ</div>
<div class="td" style="left:634px;width:102px;letter-spacing:0.33px"></div>
<div class="td" style="left:741px;width:71px;letter-spacing:0.08px">Калибровка</div>
<div class="td" style="left:817px;width:158px;letter-spacing:-0.16px">..\ОКИПА</div>
<div class="td" style="left:980px;width:64px;letter-spacing:0.5px">Нет</div>
<div class="td" style="left:1049px;width:121px;letter-spacing:0.3px">Рабочее</div>
<div class="td" style="left:1175px;width:234px;letter-spacing:0.08px">Заявлено в поверку, калибровку</div>
</div>
<div class="row r1" style="top:270px">
<div class="cc"><i class="cb"></i></div>
<div class="td" style="left:34px;width:88px;letter-spacing:0.33px">206494</div>
<div class="td" style="left:127px;width:132px;letter-spacing:0.33px">301116_1</div>
<div class="td" style="left:264px;width:129px;letter-spacing:0.02px">Сужающее устройство</div>
<div class="td" style="left:398px;width:231px;letter-spacing:0.03px">Диафрагма</div>
<div class="td" style="left:634px;width:102px;letter-spacing:0.33px"></div>
<div class="td" style="left:741px;width:71px;letter-spacing:0.08px">Поверка</div>
<div class="td" style="left:817px;width:158px;letter-spacing:-0.2px">..\ta</div>
<div class="td" style="left:980px;width:64px;letter-spacing:0.5px">Нет</div>
<div class="td" style="left:1049px;width:121px;letter-spacing:0.08px"></div>
<div class="td" style="left:1175px;width:234px;letter-spacing:0.08px">Заявлено в поверку, калибровку</div>
</div>
<div class="row r0" style="top:292px">
<div class="cc"><i class="cb"></i></div>
<div class="td" style="left:34px;width:88px;letter-spacing:0.33px">206500</div>
<div class="td" style="left:127px;width:132px;letter-spacing:0.33px">257</div>
<div class="td" style="left:264px;width:129px;letter-spacing:0.2px">Средство измерений</div>
<div class="td" style="left:398px;width:231px;letter-spacing:0.15px">Мультиметр</div>
<div class="td" style="left:634px;width:102px;letter-spacing:0.33px"></div>
<div class="td" style="left:741px;width:71px;letter-spacing:0.08px">Поверка</div>
<div class="td" style="left:817px;width:158px;letter-spacing:-0.2px">..\ta</div>
<div class="td" style="left:980px;width:64px;letter-spacing:0.5px">Нет</div>
<div class="td" style="left:1049px;width:121px;letter-spacing:0.3px">Рабочее</div>
<div class="td" style="left:1175px;width:234px;letter-spacing:0.14px">В эксплуатации</div>
</div>
<div class="row r1" style="top:314px">
<div class="cc"><i class="cb"></i></div>
<div class="td" style="left:34px;width:88px;letter-spacing:0.33px">206508</div>
<div class="td" style="left:127px;width:132px;letter-spacing:-0.25px">АТХ-1</div>
<div class="td" style="left:264px;width:129px;letter-spacing:0.2px">Средство измерений</div>
<div class="td" style="left:398px;width:231px;letter-spacing:0.14px">Весы почтовые</div>
<div class="td" style="left:634px;width:102px;letter-spacing:0.33px">19.06.2015</div>
<div class="td" style="left:741px;width:71px;letter-spacing:0.08px">Поверка</div>
<div class="td" style="left:817px;width:158px;letter-spacing:0.16px">ФБУ &quot;Новосибирский ЦСМ&quot;</div>
<div class="td" style="left:980px;width:64px;letter-spacing:-0.5px">Да</div>
<div class="td" style="left:1049px;width:121px;letter-spacing:0.3px">Рабочее</div>
<div class="td" style="left:1175px;width:234px;letter-spacing:0.14px">В эксплуатации</div>
</div>
<div class="row r0" style="top:336px">
<div class="cc"><i class="cb"></i></div>
<div class="td" style="left:34px;width:88px;letter-spacing:0.33px">206512</div>
<div class="td" style="left:127px;width:132px;letter-spacing:-0.25px">АТХ-2</div>
<div class="td" style="left:264px;width:129px;letter-spacing:0.2px">Средство измерений</div>
<div class="td" style="left:398px;width:231px;letter-spacing:0.13px">Весы товарные</div>
<div class="td" style="left:634px;width:102px;letter-spacing:0.33px">19.06.2015</div>
<div class="td" style="left:741px;width:71px;letter-spacing:0.08px">Поверка</div>
<div class="td" style="left:817px;width:158px;letter-spacing:0.16px">ФБУ &quot;Новосибирский ЦСМ&quot;</div>
<div class="td" style="left:980px;width:64px;letter-spacing:-0.5px">Да</div>
<div class="td" style="left:1049px;width:121px;letter-spacing:0.3px">Рабочее</div>
<div class="td" style="left:1175px;width:234px;letter-spacing:0.14px">В эксплуатации</div>
</div>
<div class="row r1" style="top:358px">
<div class="cc"><i class="cb"></i></div>
<div class="td" style="left:34px;width:88px;letter-spacing:0.33px">206516</div>
<div class="td" style="left:127px;width:132px;letter-spacing:-0.25px">АТХ-3</div>
<div class="td" style="left:264px;width:129px;letter-spacing:0.2px">Средство измерений</div>
<div class="td" style="left:398px;width:231px;letter-spacing:0.25px">Ключ-динамометрич.</div>
<div class="td" style="left:634px;width:102px;letter-spacing:0.33px">01.12.2015</div>
<div class="td" style="left:741px;width:71px;letter-spacing:0.08px">Поверка</div>
<div class="td" style="left:817px;width:158px;letter-spacing:0.16px">ФБУ &quot;Новосибирский ЦСМ&quot;</div>
<div class="td" style="left:980px;width:64px;letter-spacing:-0.5px">Да</div>
<div class="td" style="left:1049px;width:121px;letter-spacing:0.3px">Рабочее</div>
<div class="td" style="left:1175px;width:234px;letter-spacing:0.14px">В эксплуатации</div>
</div>
<div class="row r0" style="top:380px">
<div class="cc"><i class="cb"></i></div>
<div class="td" style="left:34px;width:88px;letter-spacing:0.33px">206520</div>
<div class="td" style="left:127px;width:132px;letter-spacing:-0.25px">АТХ-4</div>
<div class="td" style="left:264px;width:129px;letter-spacing:0.2px">Средство измерений</div>
<div class="td" style="left:398px;width:231px;letter-spacing:0.06px">Манометр для пров-и давления в шинах</div>
<div class="td" style="left:634px;width:102px;letter-spacing:0.33px">20.10.2016</div>
<div class="td" style="left:741px;width:71px;letter-spacing:0.08px">Поверка</div>
<div class="td" style="left:817px;width:158px;letter-spacing:0.16px">ФБУ &quot;Новосибирский ЦСМ&quot;</div>
<div class="td" style="left:980px;width:64px;letter-spacing:-0.5px">Да</div>
<div class="td" style="left:1049px;width:121px;letter-spacing:0.3px">Рабочее</div>
<div class="td" style="left:1175px;width:234px;letter-spacing:0.14px">В эксплуатации</div>
</div>
<div class="row r1" style="top:402px">
<div class="cc"><i class="cb"></i></div>
<div class="td" style="left:34px;width:88px;letter-spacing:0.33px"></div>
<div class="td" style="left:127px;width:132px;letter-spacing:0.33px"></div>
<div class="td" style="left:264px;width:129px;letter-spacing:0.2px">Средство измерений</div>
<div class="td" style="left:398px;width:231px;letter-spacing:0.08px"></div>
<div class="td" style="left:634px;width:102px;letter-spacing:0.33px"></div>
<div class="td" style="left:741px;width:71px;letter-spacing:0.08px"></div>
<div class="td" style="left:817px;width:158px;letter-spacing:0.16px">ФБУ &quot;Новосибирский ЦСМ&quot;</div>
<div class="td" style="left:980px;width:64px;letter-spacing:0.08px"></div>
<div class="td" style="left:1049px;width:121px;letter-spacing:0.08px"></div>
<div class="td" style="left:1175px;width:234px;letter-spacing:0.08px"></div>
</div>
</div>
<div id="vs"><i class="ar" style="left:5px;top:7px;border-width:0 3.500px 4px;border-bottom-color:#a9a7aa"></i><b></b><i class="ar" style="left:4.700px;top:397px;border-width:4.200px 3.700px 0;border-top-color:#555"></i></div>
<div id="hs"><i class="ar" style="left:6px;top:4px;border-width:4px 4px 4px 0;border-right-color:#8f8d90"></i><b></b><i class="ar" style="left:1338px;top:5px;border-width:3.500px 0 3.500px 4.200px;border-left-color:#555"></i></div>
<div style="position:absolute;left:1351px;top:603px;width:14px;height:17px;background:#fff"></div>
<div style="position:absolute;left:0;top:195px;width:2px;height:427px;background:#a9a9a9"></div>
<div style="position:absolute;left:2px;top:620px;width:1363px;height:2px;background:#f8f4f8;border-top:1px dashed #fff"></div>
</div>

</body></html>
